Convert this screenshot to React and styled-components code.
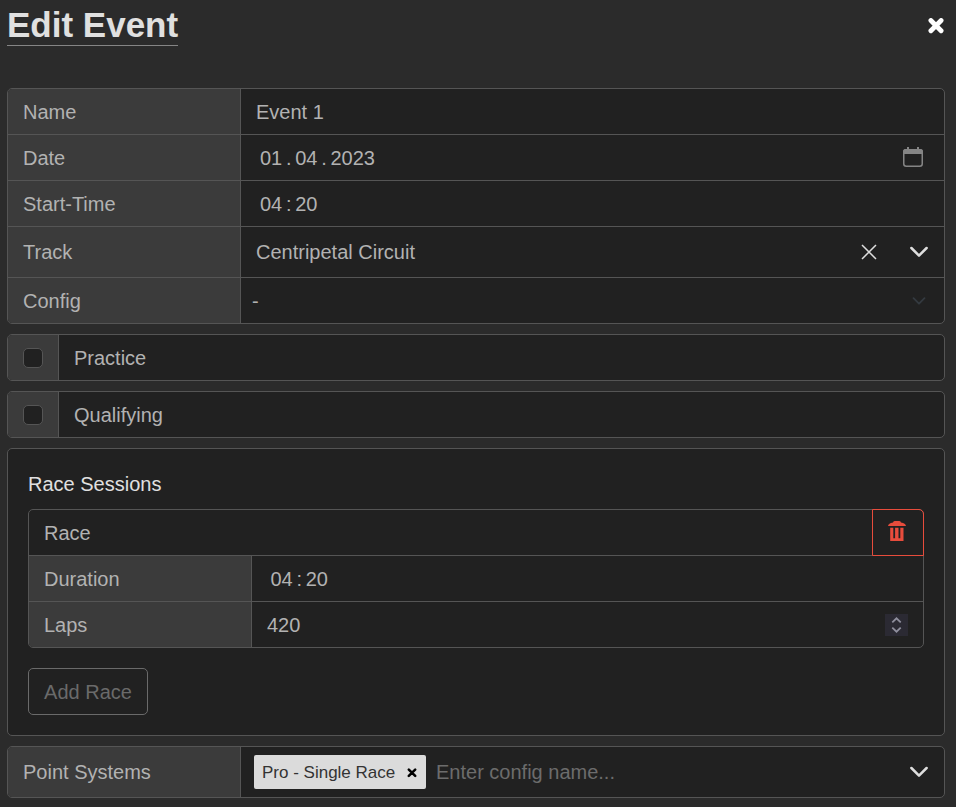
import React from "react";
import styled, { createGlobalStyle } from "styled-components";

const Global = createGlobalStyle`
  *, *::before, *::after { box-sizing: border-box; }
  html, body { margin: 0; background: #2b2b2b; }
  body {
    font-family: "Liberation Sans", Arial, sans-serif;
    font-size: 20px;
    line-height: 30px;
    color: #b2b2b2;
  }
`;

const Page = styled.form`
  min-height: 807px;
  padding: 5px 11px 9px 7px;
`;

const Header = styled.header`
  display: flex;
  align-items: flex-start;
  justify-content: space-between;
  height: 83px;
`;

const Title = styled.h1`
  margin: 0;
  height: 41px;
  border-bottom: 1px solid #858585;
  font-size: 35px;
  line-height: 40px;
  font-weight: 700;
  color: #e0e0e0;
`;

const IconButton = styled.button`
  display: flex;
  padding: 0;
  border: 0;
  background: none;
  color: ${({ $color }) => $color || "#dedede"};
`;

const CloseButton = styled(IconButton)`
  margin: 13px 1px 0 0;
`;

const Stack = styled.div`
  display: flex;
  flex-direction: column;
  gap: 10px;
`;

const Group = styled.div`
  border: 1px solid #555;
  border-radius: 5px;
  background: #212121;
`;

const Row = styled.div`
  display: flex;
  box-sizing: content-box;
  height: ${({ $height }) => $height || 45}px;
  &:not(:first-child) {
    border-top: 1px solid #555;
  }
`;

const Label = styled.label`
  flex: none;
  display: flex;
  align-items: center;
  width: ${({ $width }) => $width || 233}px;
  padding: ${({ $top = 1 }) => $top}px 15px 0;
  border-right: 1px solid #555;
  border-radius: ${({ $corners }) => $corners || 0};
  background: #3b3b3b;
`;

const CheckCell = styled(Label)`
  padding-top: 0;
`;

const Field = styled.div`
  flex: 1;
  display: flex;
  align-items: center;
  padding: ${({ $top = 1 }) => $top}px ${({ $right }) => $right || 16}px 0 ${({ $left }) => $left || 15}px;
`;

const Value = styled.span`
  flex: 1;
  white-space: pre;
  color: ${({ $muted }) => ($muted ? "#6c6c6c" : "#b2b2b2")};
`;

const Segments = styled.span`
  flex: 1;
  display: flex;
`;

const Separator = styled.span`
  width: 13px;
  text-align: center;
`;

const Icons = styled.div`
  display: flex;
  align-items: center;
  gap: 33px;
  color: #dedede;
`;

const Svg = styled.svg`
  display: block;
  flex: none;
`;

const CalendarSvg = styled(Svg)`
  margin-bottom: 2px;
`;

const Checkbox = styled.input`
  appearance: none;
  width: 20px;
  height: 20px;
  margin: 0;
  border: 1px solid #555;
  border-radius: 5px;
  background: #212121;
`;

const Sessions = styled(Group)`
  height: 288px;
  padding: 20px;
`;

const Subtitle = styled.h2`
  margin: 0 0 10px;
  font-size: 20px;
  line-height: 30px;
  font-weight: 400;
  color: #e0e0e0;
`;

const DeleteButton = styled(IconButton)`
  position: relative;
  z-index: 1;
  flex: none;
  width: 52px;
  height: 47px;
  margin: -1px -1px -1px 0;
  padding: 0 2px 3px 0;
  align-items: center;
  justify-content: center;
  border: 1px solid #e74c3c;
  border-top-right-radius: 5px;
`;

const Spinner = styled.span`
  display: flex;
  align-items: center;
  justify-content: center;
  width: 23px;
  height: 22px;
  background: #2b2a33;
  color: #8f8f9d;
`;

const AddButton = styled.button`
  width: 120px;
  height: 47px;
  margin-top: 20px;
  padding: 1px 0 0;
  border: 1px solid #6a6a6a;
  border-radius: 5px;
  background: none;
  font: inherit;
  color: #6a6a6a;
`;

const Chip = styled.span`
  display: flex;
  align-items: center;
  justify-content: space-between;
  width: 172px;
  height: 34px;
  margin-right: 10px;
  padding: 1px 9px 0 8px;
  border-radius: 2px;
  background: #dbdbdb;
  font-size: 17px;
  color: #333;
`;

const Chevron = ({ small }) =>
  small ? (
    <Svg width="18" height="12" viewBox="0 0 18 12" fill="none" stroke="#343a40" strokeWidth="1.8" strokeLinecap="round" strokeLinejoin="round">
      <path d="M3.500 3.200 9 8.700l5.500-5.500" />
    </Svg>
  ) : (
    <Svg width="18" height="12" viewBox="0 0 18 12" fill="none" stroke="currentColor" strokeWidth="2.5" strokeLinecap="round" strokeLinejoin="round">
      <path d="M1.400 2 9 9.600l7.600-7.600" />
    </Svg>
  );

const Cross = ({ size, weight = 4.8 }) => (
  <Svg width={size} height={size} viewBox="0 0 16 16" fill="none" stroke="currentColor" strokeWidth={weight}>
    <path d="m2.900 2.500 10.200 10.200M13.100 2.500 2.900 12.700" strokeLinecap="round" />
  </Svg>
);

const ClearIcon = () => (
  <Svg width="16" height="16" viewBox="0 0 16 16" fill="none" stroke="currentColor" strokeWidth="1.5">
    <path d="m1 1 14 14M15 1 1 15" />
  </Svg>
);

const CalendarIcon = () => (
  <CalendarSvg width="20" height="20" viewBox="0 0 20 20">
    <rect x=".75" y="2.750" width="18.500" height="16.500" rx="2.500" fill="none" stroke="#858585" strokeWidth="1.5" />
    <path fill="#858585" d="M4 0h2v2h8V0h2v2h1.500A2.500 2.500 0 0 1 20 4.500V7H0V4.500A2.500 2.500 0 0 1 2.500 2H4z" />
  </CalendarSvg>
);

const TrashIcon = () => (
  <Svg width="18" height="20" viewBox="0 0 18 20" fill="#e74c3c">
    <path d="M5 1.400Q5.500 0 7 0h4q1.500 0 2 1.400Q17.600 2.100 18 5H0Q.4 2.100 5 1.400z" />
    <path fillRule="evenodd" d="M2.200 6.800h13.300V20H2.200zM5.300 6.800v10.400h1.800V6.800zM10.500 6.800v10.400h1.800V6.800z" />
  </Svg>
);

const SpinnerIcon = () => (
  <Svg width="11" height="16" viewBox="0 0 11 16" fill="none" stroke="currentColor" strokeWidth="1.8">
    <path d="m1.300 5.300 4.200-4 4.200 4M1.300 10.700l4.200 4 4.200-4" />
  </Svg>
);

const Time = () => (
  <Segments>
    04<Separator>:</Separator>20
  </Segments>
);

const Option = ({ name }) => (
  <Group>
    <Row>
      <CheckCell $width={51} $corners="4px 0 0 4px">
        <Checkbox type="checkbox" aria-label={name} />
      </CheckCell>
      <Field>
        <Value>{name}</Value>
      </Field>
    </Row>
  </Group>
);

export default function App() {
  return (
    <>
      <Global />
      <Page>
        <Header>
          <Title>Edit Event</Title>
          <CloseButton type="button" aria-label="Close" $color="#fff">
            <Cross size={16} />
          </CloseButton>
        </Header>
        <Stack>
          <Group>
            <Row>
              <Label $corners="4px 0 0 0">Name</Label>
              <Field><Value>Event 1</Value></Field>
            </Row>
            <Row>
              <Label>Date</Label>
              <Field $left={19} $right={21}>
                <Segments>
                  01<Separator>.</Separator>04<Separator>.</Separator>2023
                </Segments>
                <CalendarIcon />
              </Field>
            </Row>
            <Row>
              <Label>Start-Time</Label>
              <Field $left={19}><Time /></Field>
            </Row>
            <Row $height={50}>
              <Label $top={0}>Track</Label>
              <Field $top={0}>
                <Value>Centripetal Circuit</Value>
                <Icons><ClearIcon /><Chevron /></Icons>
              </Field>
            </Row>
            <Row>
              <Label $corners="0 0 0 4px">Config</Label>
              <Field $left={11}>
                <Value>-</Value>
                <Chevron small />
              </Field>
            </Row>
          </Group>
          <Option name="Practice" />
          <Option name="Qualifying" />
          <Sessions>
            <Subtitle>Race Sessions</Subtitle>
            <Group>
              <Row>
                <Field><Value>Race</Value></Field>
                <DeleteButton type="button" aria-label="Delete race">
                  <TrashIcon />
                </DeleteButton>
              </Row>
              <Row>
                <Label $width={223}>Duration</Label>
                <Field $left={18.5}><Time /></Field>
              </Row>
              <Row>
                <Label $width={223} $corners="0 0 0 4px">Laps</Label>
                <Field $right={15}>
                  <Value>420</Value>
                  <Spinner><SpinnerIcon /></Spinner>
                </Field>
              </Row>
            </Group>
            <AddButton type="button">Add Race</AddButton>
          </Sessions>
          <Group>
            <Row $height={50}>
              <Label $top={0} $corners="4px 0 0 4px">Point Systems</Label>
              <Field $left={13} $top={0}>
                <Chip>
                  Pro - Single Race
                  <IconButton type="button" aria-label="Remove" $color="#000">
                    <Cross size={10} weight={4} />
                  </IconButton>
                </Chip>
                <Value $muted>Enter config name...</Value>
                <Icons><Chevron /></Icons>
              </Field>
            </Row>
          </Group>
        </Stack>
      </Page>
    </>
  );
}
